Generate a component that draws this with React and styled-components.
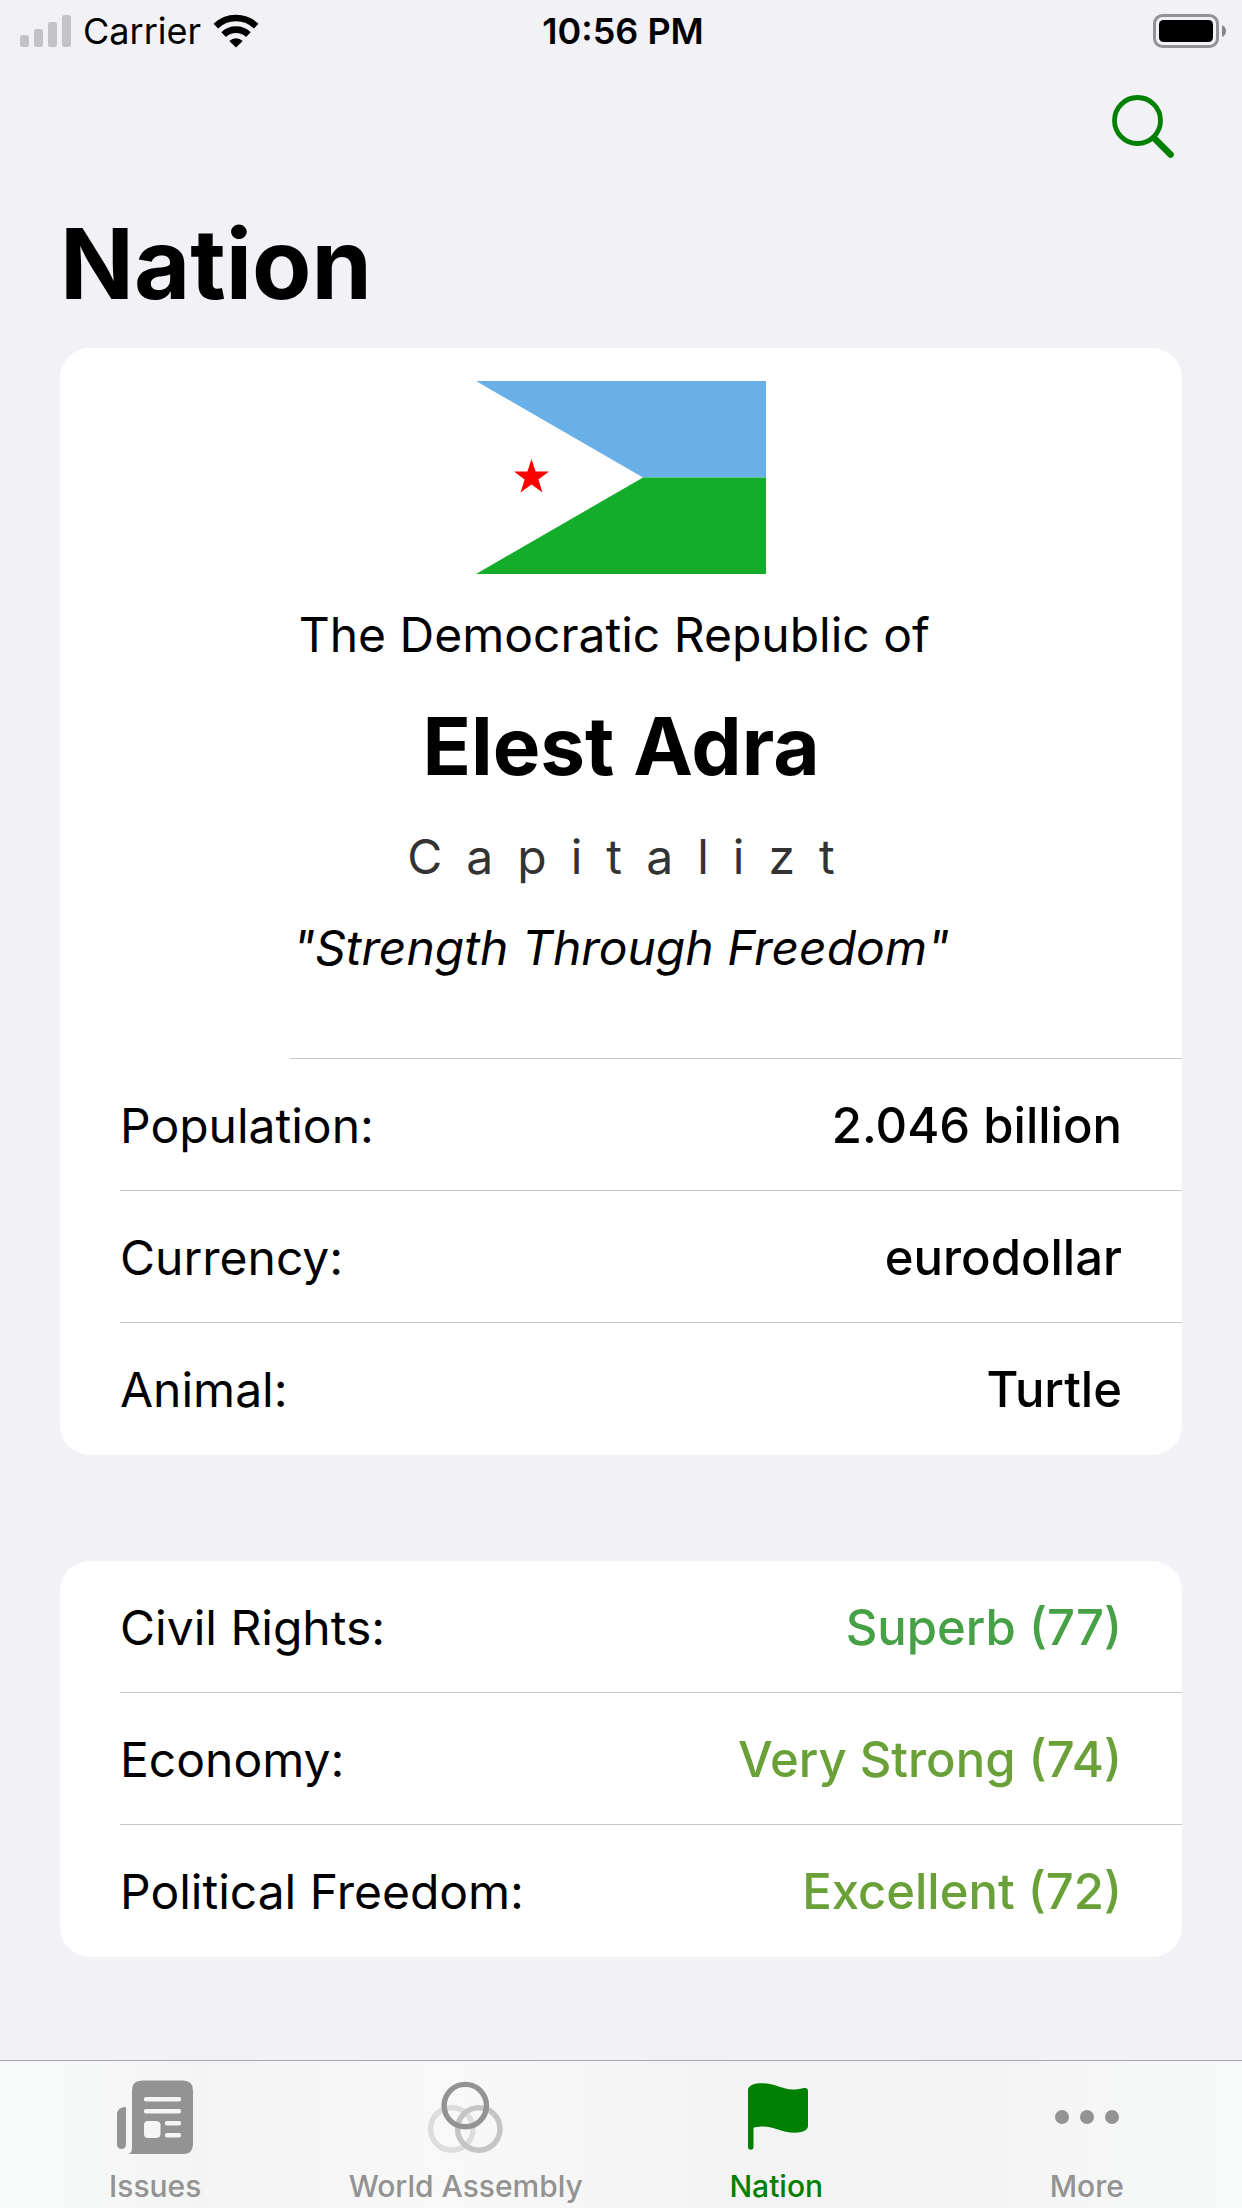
import React from "react";
import styled, { createGlobalStyle } from "styled-components";

const GlobalStyle = createGlobalStyle`
  *, *::before, *::after { box-sizing: border-box; }
  body {
    margin: 0;
    background: #f2f1f6;
    color: #000;
    font-family: Inter, "Liberation Sans", sans-serif;
  }
  h1, h2, p, dl, dt, dd, ul { margin: 0; padding: 0; }
`;

const Screen = styled.div`
  min-height: 100vh;
  display: flex;
  flex-direction: column;
`;

const StatusBar = styled.header`
  display: grid;
  grid-template-columns: 1fr auto 1fr;
  align-items: center;
  height: 62px;
  padding: 0 16px 0 20px;
  font-size: 36px;
  line-height: 42px;
`;

const StatusGroup = styled.div`
  display: flex;
  align-items: center;
  gap: ${(p) => p.$gap || 0}px;
  justify-content: ${(p) => (p.$end ? "flex-end" : "flex-start")};
  svg { display: block; }
`;

const Clock = styled.time`
  font-weight: 600;
`;

const NavBar = styled.div`
  display: flex;
  justify-content: flex-end;
  align-items: center;
  height: 130px;
  padding: 0 68px;
`;

const IconButton = styled.button`
  display: flex;
  padding: 0;
  border: 0;
  background: none;
  color: #008000;
  cursor: pointer;
`;

const Content = styled.main`
  flex: 1;
  padding: 12px 60px 100px;
`;

const Title = styled.h1`
  font-size: 97px;
  line-height: 120px;
  font-weight: 700;
  margin-bottom: 24px;
`;

const Card = styled.section`
  background: #fff;
  border-radius: 30px;
  overflow: hidden;
  & + & { margin-top: 106px; }
`;

const Profile = styled.div`
  display: flex;
  flex-direction: column;
  align-items: center;
  gap: 31px;
  padding: 33px 60px 80px;
  font-size: 48px;
  line-height: 60px;
  text-align: center;
  svg { display: block; }
`;

const Pretitle = styled.p`
  white-space: pre-wrap;
`;

const NationName = styled.h2`
  font-size: 80px;
  line-height: 100px;
  font-weight: 700;
`;

const Category = styled.p`
  color: #333;
  letter-spacing: 24px;
  padding-left: 24px;
`;

const Motto = styled.p`
  font-style: italic;
`;

const Divider = styled.hr`
  height: 1px;
  margin: 0 0 0 230px;
  border: 0;
  background: #c6c6c8;
`;

const Stats = styled.dl`
  padding-left: 60px;
`;

const StatRow = styled.div`
  display: flex;
  align-items: center;
  justify-content: space-between;
  height: 132px;
  padding: 3px 60px 0 0;
  border-bottom: 1px solid #c6c6c8;
  font-size: 48px;
  line-height: 60px;
  &:last-child { border-bottom-color: transparent; }
`;

const StatValue = styled.dd`
  font-size: 49px;
  font-weight: 500;
  color: ${(p) => p.$color || "#000"};
`;

const TabBar = styled.nav`
  display: flex;
  height: 148px;
  border-top: 1px solid #a7a6ab;
  background: linear-gradient(90deg, #f8fafa 0%, #f4f4f4 16%, #f8f8f8 36%, #f3f3f3 62%, #f4f4f4 80%, #f7f9f9 100%);
`;

const Tab = styled.a`
  flex: 1;
  display: flex;
  flex-direction: column;
  align-items: center;
  gap: 11px;
  padding-top: 16px;
  color: ${(p) => (p.$active ? "#008000" : "#929392")};
  font-size: 30px;
  line-height: 36px;
  font-weight: 500;
  text-decoration: none;
  svg { display: block; }
`;

function SignalIcon() {
  return (
    <svg width="51" height="32" viewBox="0 0 51 32" fill="#c3c2c7" aria-hidden="true">
      <rect x="0" y="20" width="9" height="12" rx="2.5" />
      <rect x="14" y="14" width="9" height="18" rx="2.5" />
      <rect x="28" y="7" width="9" height="25" rx="2.5" />
      <rect x="42" y="0" width="9" height="32" rx="2.5" />
    </svg>
  );
}

function WifiIcon() {
  return (
    <svg width="46" height="34" viewBox="0 0 46 34" aria-hidden="true">
      <g fill="none" stroke="#000" strokeWidth="6.6">
        <path d="M2.8 12.2 A29 29 0 0 1 43.2 12.2" />
        <path d="M10.6 20.6 A18 18 0 0 1 35.4 20.6" />
      </g>
      <path d="M16.3 27 A9.6 9.6 0 0 1 29.7 27 L23 33.6 Z" />
    </svg>
  );
}

function BatteryIcon() {
  return (
    <svg width="73" height="34" viewBox="0 0 73 34" aria-hidden="true">
      <rect x="1.5" y="1.5" width="63" height="31" rx="8" fill="none" stroke="#929195" strokeWidth="3" />
      <rect x="6" y="6" width="54" height="22" rx="4.5" />
      <path d="M69 11 Q73 13 73 17 Q73 21 69 23 Z" fill="#87868a" />
    </svg>
  );
}

function SearchIcon() {
  return (
    <svg width="62" height="64" viewBox="0 0 62 64" fill="none" stroke="currentColor" aria-hidden="true">
      <circle cx="25.5" cy="25.5" r="23" strokeWidth="4.8" />
      <path d="M42 43 L58.5 59.5" strokeWidth="6.6" strokeLinecap="round" />
    </svg>
  );
}

function FlagImage() {
  return (
    <svg width="290" height="193" viewBox="0 0 290 193" role="img" aria-label="Flag of Elest Adra">
      <rect width="290" height="96.5" fill="#6ab0e8" />
      <rect y="96.5" width="290" height="96.5" fill="#14ad2b" />
      <path d="M0 0 L167 96.5 L0 193 Z" fill="#fff" />
      <path
        d="M55.5 78 L59.6 90.600 L73 90.600 L62.4 98.500 L66.5 111.500 L55.5 103.500 L44.5 111.500 L48.6 98.500 L38 90.600 L51.4 90.600 Z"
        fill="#f00"
      />
    </svg>
  );
}

function NewspaperIcon() {
  return (
    <svg width="76" height="80" viewBox="0 0 76 80" fill="currentColor" aria-hidden="true">
      <path d="M9 30 V67.5 A4.5 4.5 0 0 1 0 67.5 V38 Q0 30 9 30 Z" />
      <path
        fillRule="evenodd"
        d="M25 3.5 H66 Q76 3.5 76 13.5 V67 Q76 77 66 77 H12 Q15 75.5 15 71 V13.5 Q15 3.5 25 3.5 Z
           M29 20 a2 2 0 0 0 0 4.4 H62 a2 2 0 0 0 0 -4.4 Z
           M29 32 a2 2 0 0 0 0 4.4 H62 a2 2 0 0 0 0 -4.4 Z
           M50 44 a2 2 0 0 0 0 4.4 H62 a2 2 0 0 0 0 -4.4 Z
           M50 56 a2 2 0 0 0 0 4.4 H62 a2 2 0 0 0 0 -4.4 Z
           M31 44 Q27 44 27 48 V57 Q27 61 31 61 H39 Q43.5 61 43.5 57 V48 Q43.5 44 39 44 Z"
      />
    </svg>
  );
}

function CirclesIcon() {
  return (
    <svg width="76" height="80" viewBox="0 0 76 80" fill="none" strokeWidth="5.4" aria-hidden="true">
      <circle cx="23.8" cy="52" r="21.2" stroke="#dddddd" />
      <circle cx="50.8" cy="52" r="21.2" stroke="#c5c5c5" />
      <circle cx="37.3" cy="28.6" r="21.2" stroke="currentColor" />
    </svg>
  );
}

function FlagIcon() {
  return (
    <svg width="76" height="80" viewBox="0 0 76 80" fill="currentColor" aria-hidden="true">
      <path d="M10 13 C10 8 17 6.2 24 6.2 C38 6.2 44 12.5 55 12.5 C62 12.5 64 11 67 11 Q70 11 70 14 V49 C70 53.5 64 55.7 57 55.7 C43 55.7 37 49.5 25 49.5 C20 49.5 15.5 50.7 15.5 50.7 V70 A2.7 2.7 0 0 1 10 70 Z" />
    </svg>
  );
}

function DotsIcon() {
  return (
    <svg width="76" height="80" viewBox="0 0 76 80" fill="currentColor" aria-hidden="true">
      <circle cx="13" cy="40" r="7" />
      <circle cx="38" cy="40" r="7" />
      <circle cx="63" cy="40" r="7" />
    </svg>
  );
}

const facts = [
  { label: "Population:", value: "2.046 billion" },
  { label: "Currency:", value: "eurodollar" },
  { label: "Animal:", value: "Turtle" },
];

const ratings = [
  { label: "Civil Rights:", value: "Superb (77)", color: "#46a146" },
  { label: "Economy:", value: "Very Strong (74)", color: "#6aa038" },
  { label: "Political Freedom:", value: "Excellent (72)", color: "#6aa038" },
];

const tabs = [
  { label: "Issues", Icon: NewspaperIcon },
  { label: "World Assembly", Icon: CirclesIcon },
  { label: "Nation", Icon: FlagIcon, active: true },
  { label: "More", Icon: DotsIcon },
];

function StatList({ items }) {
  return (
    <Stats>
      {items.map((item) => (
        <StatRow key={item.label}>
          <dt>{item.label}</dt>
          <StatValue $color={item.color}>{item.value}</StatValue>
        </StatRow>
      ))}
    </Stats>
  );
}

export default function App() {
  return (
    <Screen>
      <GlobalStyle />
      <StatusBar>
        <StatusGroup $gap={12}>
          <SignalIcon />
          <span>Carrier</span>
          <WifiIcon />
        </StatusGroup>
        <Clock>10:56 PM</Clock>
        <StatusGroup $end>
          <BatteryIcon />
        </StatusGroup>
      </StatusBar>
      <NavBar>
        <IconButton type="button" aria-label="Search">
          <SearchIcon />
        </IconButton>
      </NavBar>
      <Content>
        <Title>Nation</Title>
        <Card>
          <Profile>
            <FlagImage />
            <Pretitle>{"The Democratic Republic of\u00a0"}</Pretitle>
            <NationName>Elest Adra</NationName>
            <Category>Capitalizt</Category>
            <Motto>"Strength Through Freedom"</Motto>
          </Profile>
          <Divider />
          <StatList items={facts} />
        </Card>
        <Card>
          <StatList items={ratings} />
        </Card>
      </Content>
      <TabBar>
        {tabs.map(({ label, Icon, active }) => (
          <Tab key={label} href="#" $active={active} aria-current={active ? "page" : undefined}>
            <Icon />
            {label}
          </Tab>
        ))}
      </TabBar>
    </Screen>
  );
}
